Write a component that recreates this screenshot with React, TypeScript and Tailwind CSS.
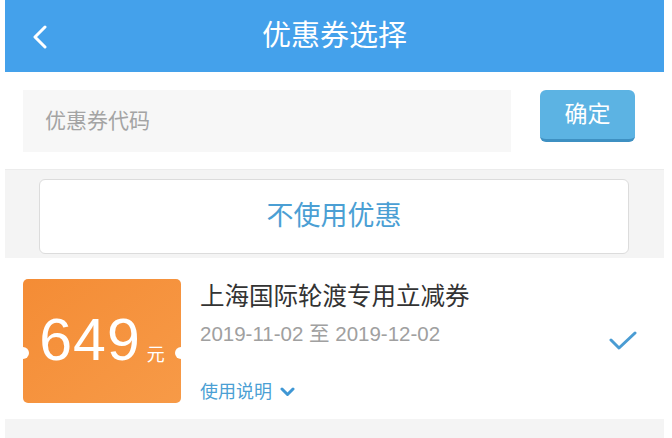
const sans = "font-['Liberation_Sans','Noto_Sans_CJK_SC',sans-serif]";

const BackIcon = () => (
  <svg width="16" height="24" viewBox="0 0 16 24" fill="none">
    <polyline points="13,2 3,12 13,22" stroke="white" strokeWidth="3" strokeLinecap="round" strokeLinejoin="round" />
  </svg>
);

const ChevronDown = () => (
  <svg width="15" height="10" viewBox="0 0 15 10" fill="none">
    <polyline points="2,2 7.5,7.5 13,2" stroke="#3f97d4" strokeWidth="3" strokeLinecap="round" strokeLinejoin="round" />
  </svg>
);

const Check = () => (
  <svg width="28" height="20" viewBox="0 0 28 20" fill="none">
    <polyline points="2,9 10,17 26,2" stroke="#4a9cd3" strokeWidth="3" strokeLinecap="round" strokeLinejoin="round" />
  </svg>
);

export default function App() {
  return (
    <div className={`w-[672px] h-[438px] bg-white overflow-hidden ${sans}`}>
      <div className="ml-[5px] w-[659px] h-full flex flex-col">
        {/* header */}
        <div className="h-[72px] bg-[#44a1eb] grid grid-cols-[1fr_auto_1fr] items-center">
          <div className="pl-[27px] pt-[1px] flex items-center">
            <BackIcon />
          </div>
          <h1 className="text-[29px] text-white leading-none">优惠券选择</h1>
          <div />
        </div>

        {/* code input */}
        <div className="h-[97px] flex items-start pt-[18px] pl-[18px]">
          <div className="w-[488px] h-[62px] bg-[#f7f7f7] flex items-center pl-[22px] text-[21px] text-[#a4a4a4]">
            优惠券代码
          </div>
          <button className="ml-[29px] w-[95px] h-[52px] rounded-[6px] bg-[#5cb3e3] border-b-[3px] border-[#3e90c2] text-white text-[23px] flex items-center justify-center">
            确定
          </button>
        </div>

        {/* no coupon */}
        <div className="h-[89px] bg-[#f4f4f4] border-t border-[#ececec] pt-[9px]">
          <div className="ml-[34px] w-[590px] h-[75px] bg-white border border-[#dcdcdc] rounded-[6px] flex items-center justify-center text-[27px] text-[#4b9fd4]">
            不使用优惠
          </div>
        </div>

        {/* coupon */}
        <div className="h-[161px] bg-white flex items-start pt-[21px] pl-[18px]">
          <div className="relative w-[158px] h-[124px] rounded-[5px] bg-gradient-to-br from-[#f48c35] to-[#f79a47] flex items-end justify-center pb-[41px] text-white">
            <span className="text-[59px] leading-[43px] tracking-[1px]">649</span>
            <span className="text-[18px] leading-none ml-[6px] -mb-[2px]">元</span>
            <span className="absolute left-[-6px] top-[68px] w-[12px] h-[12px] rounded-full bg-white" />
            <span className="absolute right-[-6px] top-[68px] w-[12px] h-[12px] rounded-full bg-white" />
          </div>
          <div className="ml-[19px] flex-1 flex flex-col">
            <div className="text-[24.5px] leading-none text-[#333] mt-[6px]">上海国际轮渡专用立减券</div>
            <div className="text-[20.5px] leading-none text-[#a0a0a0] mt-[14px]">2019-11-02 至 2019-12-02</div>
            <div className="flex items-center gap-[8px] mt-[39px] text-[18px] leading-none text-[#4b9fd4]">
              使用说明
              <ChevronDown />
            </div>
          </div>
          <div className="mt-[52px] mr-[27px]">
            <Check />
          </div>
        </div>

        <div className="flex-1 bg-[#f4f4f4]" />
      </div>
    </div>
  );
}
